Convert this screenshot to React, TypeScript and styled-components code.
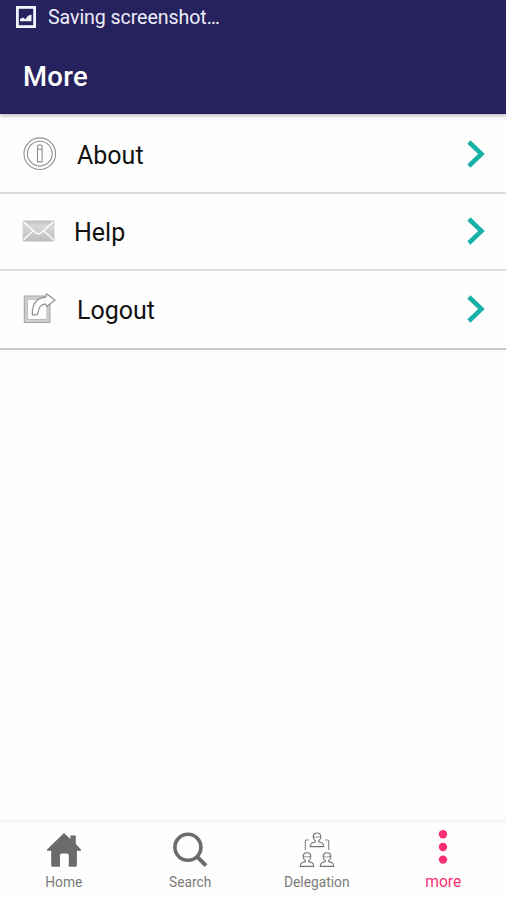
import React from "react";
import styled, { createGlobalStyle } from "styled-components";

const GlobalStyle = createGlobalStyle`
  * { box-sizing: border-box; }
  body { margin: 0; background: #fefefe; font-family: Roboto, "Liberation Sans", sans-serif; overflow: hidden; }
`;

const Screen = styled.div`
  width: 506px;
  height: 900px;
  display: flex;
  flex-direction: column;
  background: #fefefe;
`;

const Header = styled.header`
  height: 114px;
  flex: none;
  background: #26225d;
  color: #fff;
  border-bottom: 1px solid #1f1b54;
  box-shadow: 0 2px 4px rgba(0, 0, 0, 0.26);
`;

const StatusBar = styled.div`
  height: 34px;
  display: flex;
  align-items: center;
  padding-left: 16px;
`;

const StatusText = styled.span`
  margin-left: 12px;
  padding-top: 1px;
  font-size: 19.6px;
  line-height: 33px;
  letter-spacing: -0.08px;
  color: #ededf8;
`;

const Title = styled.h1`
  margin: 0;
  padding: 25px 0 0 23px;
  font-size: 27.5px;
  line-height: 36px;
  letter-spacing: 0.3px;
  font-weight: 500;
`;

const List = styled.main`
  flex: 1;
`;

const Row = styled.div<{ $height: number; $last?: boolean }>`
  height: ${(p) => p.$height}px;
  display: flex;
  align-items: flex-start;
  padding: 22px 20px 0 22px;
  border-bottom: 2px solid ${(p) => (p.$last ? "#cacaca" : "#dcdcdc")};
`;

const IconSlot = styled.span<{ $width: number; $top?: number }>`
  width: ${(p) => p.$width}px;
  flex: none;
  padding-top: ${(p) => p.$top ?? 0}px;
  svg { display: block; }
`;

const RowLabel = styled.span<{ $lift?: number }>`
  flex: 1;
  font-size: 25px;
  line-height: 38px;
  margin-top: ${(p) => 1 - (p.$lift ?? 0)}px;
  color: #111;
`;

const ChevronIcon = styled.svg<{ $lift: number }>`
  display: block;
  margin-top: ${(p) => 3 - p.$lift}px;
`;

const TabBar = styled.nav`
  height: 81px;
  flex: none;
  display: grid;
  grid-template-columns: repeat(4, 1fr);
  border-top: 4px solid #f7f7f7;
`;

const Tab = styled.div<{ $active?: boolean }>`
  display: flex;
  flex-direction: column;
  align-items: center;
  padding: 8px 0 0 1px;
  font-size: ${(p) => (p.$active ? 15.6 : 13.8)}px;
  line-height: 20px;
  color: ${(p) => (p.$active ? "#fb2f75" : "#7a7a7a")};
  svg { display: block; margin-bottom: 3px; overflow: visible; }
`;

const PictureIcon = () => (
  <svg width="20" height="22" viewBox="0 0 20 22">
    <rect x="1.4" y="1.4" width="17.2" height="19.2" fill="none" stroke="#f1f1fa" strokeWidth="2.8" />
    <path d="M4 15.3V13l3-1.6 2.5 1.8L12 9.8l3.5-1.3v6.8z" fill="#f1f1fa" />
  </svg>
);

const InfoIcon = () => (
  <svg width="36" height="36" viewBox="0 0 36 36" fill="none" stroke="#909090" strokeWidth="1.1">
    <circle cx="17.8" cy="17.7" r="15.8" />
    <circle cx="17.8" cy="17.7" r="12.4" />
    <path d="M15.5 13.2v-2.1a2.3 2.3 0 0 1 4.6 0v14.8h-4.6V13.2h4.6" />
  </svg>
);

const MailIcon = () => (
  <svg width="33" height="22" viewBox="0 0 33 23" preserveAspectRatio="none">
    <defs>
      <linearGradient id="mail" x1="0" y1="0" x2="0" y2="1">
        <stop offset="0" stopColor="#bdbdbd" />
        <stop offset="0.25" stopColor="#d8d8d8" />
        <stop offset="1" stopColor="#bcbcbc" />
      </linearGradient>
    </defs>
    <rect x="0.5" y="0.5" width="32" height="22" rx="1.8" fill="url(#mail)" />
    <path
      d="M1.5 2 14.4 13.8q2.1 1.7 4.2 0L31.5 2M1.5 20.7 11.2 11.3M31.5 20.7 21.8 11.3"
      fill="none"
      stroke="#fafafa"
      strokeWidth="1.6"
    />
  </svg>
);

const LogoutIcon = () => (
  <svg width="34" height="32" viewBox="0 0 34 32" fill="none" strokeLinejoin="round">
    <path d="M3.6 4.4h23v23.8h-23z" stroke="#d0d0d0" strokeWidth="3" />
    <path d="M2.3 3h25.6v26.5H2.3z" stroke="#a0a0a0" strokeWidth="1" />
    <path d="M5.4 6.3h19.5v20.2H5.4z" stroke="#b2b2b2" strokeWidth="0.9" />
    <path
      d="M10.3 21.8C10 11.8 14.2 5.1 23.8 4.2L24.6.8 33 7.2l-8.4 6.3-1-2.6c-6 .6-6.8 4.8-7.8 9.5q-.3 1.4-1.7 1.4z"
      fill="#fff"
      stroke="#919191"
      strokeWidth="1.2"
    />
  </svg>
);

const Chevron = ({ lift = 0 }: { lift?: number }) => (
  <ChevronIcon $lift={lift} width="20" height="30" viewBox="0 0 20 30">
    <path d="M2.9 3 15.5 15 2.9 27" fill="none" stroke="#18b1a8" strokeWidth="4.5" />
  </ChevronIcon>
);

const HomeIcon = () => (
  <svg width="36" height="38" viewBox="0 0 36 38">
    <path
      d="M18 2 24.4 8V4.4h5.4v8.7L35 18.4v1.3h-4.1v14.5q0 1.6-1.7 1.6h-6.4V24.3q0-1.8-1.6-1.8h-5.5q-1.7 0-1.7 1.8v11.5H6.8q-1.6 0-1.6-1.6V19.7H1v-1.3z"
      fill="#6b6b6b"
    />
  </svg>
);

const SearchIcon = () => (
  <svg width="36" height="38" viewBox="0 0 36 38" fill="none" stroke="#6b6b6b">
    <circle cx="15.9" cy="16.3" r="13" strokeWidth="3.6" />
    <path d="m25 25.6 9 9" strokeWidth="4" />
  </svg>
);

const Person = ({ x, y }: { x: number; y: number }) => (
  <g transform={`translate(${x} ${y})`}>
    <path d="M3.2 3.9c0-4.9 7.6-4.9 7.6 0 0 1.9-1 3.4-2.1 4.1v1.1l3.4 1.1q1.5.7 1.6 3.6H.3q.1-2.9 1.6-3.6l3.4-1.1V8C4.2 7.3 3.2 5.8 3.2 3.9z" />
    <path d="M3.3 4.2q3.7.8 7.4-.4" strokeWidth="0.8" />
  </g>
);

const DelegationIcon = () => (
  <svg width="36" height="38" viewBox="0 0 36 38" fill="none" stroke="#777" strokeWidth="1.2">
    <Person x={11} y={1.8} />
    <Person x={1} y={21.5} />
    <Person x={21} y={21.5} />
    <path d="M9.9 9H7q-.7 0-.7 1v9M26.1 9H29q.7 0 .7 1v9" stroke="#8c8c8c" />
  </svg>
);

const DotsIcon = () => (
  <svg width="36" height="38" viewBox="0 0 36 38" fill="#fb2f75">
    <circle cx="18" cy="3.2" r="4.2" />
    <circle cx="18" cy="16" r="4.2" />
    <circle cx="18" cy="28.6" r="4.2" />
  </svg>
);

export default function App() {
  return (
    <Screen>
      <GlobalStyle />
      <Header>
        <StatusBar>
          <PictureIcon />
          <StatusText>Saving screenshot…</StatusText>
        </StatusBar>
        <Title>More</Title>
      </Header>
      <List>
        <Row $height={80}>
          <IconSlot $width={55}><InfoIcon /></IconSlot>
          <RowLabel>About</RowLabel>
          <Chevron />
        </Row>
        <Row $height={77}>
          <IconSlot $width={52} $top={4}><MailIcon /></IconSlot>
          <RowLabel $lift={3}>Help</RowLabel>
          <Chevron lift={3} />
        </Row>
        <Row $height={79} $last>
          <IconSlot $width={55}><LogoutIcon /></IconSlot>
          <RowLabel $lift={2}>Logout</RowLabel>
          <Chevron lift={2} />
        </Row>
      </List>
      <TabBar>
        <Tab><HomeIcon />Home</Tab>
        <Tab><SearchIcon />Search</Tab>
        <Tab><DelegationIcon />Delegation</Tab>
        <Tab $active><DotsIcon />more</Tab>
      </TabBar>
    </Screen>
  );
}
